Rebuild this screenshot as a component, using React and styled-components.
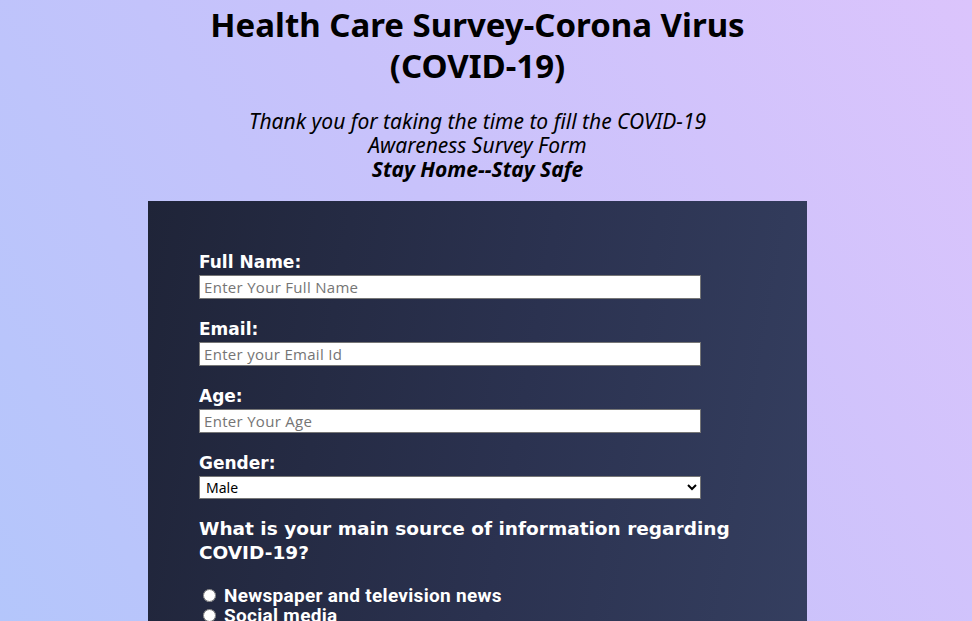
import styled, { createGlobalStyle } from 'styled-components';

const GlobalStyle = createGlobalStyle`
  html, body {
    margin: 0;
    padding: 0;
  }
  body {
    min-height: 100vh;
    background: linear-gradient(60deg, #b4c6fb 0%, #c8c2fb 50%, #dbc4fc 100%);
    background-attachment: fixed;
    font-family: "Noto Sans", "Open Sans", sans-serif;
  }
`;

const Page = styled.div`
  width: 955px;
  display: flex;
  flex-direction: column;
  align-items: center;
`;

const Header = styled.header`
  width: 560px;
  display: flex;
  flex-direction: column;
  align-items: center;
  text-align: center;
  color: #000;
`;

const Title = styled.h1`
  margin: 4px 0 0;
  font-family: "Noto Sans", sans-serif;
  font-size: 33px;
  line-height: 41px;
  font-weight: 700;
`;

const Subtitle = styled.p`
  width: 500px;
  margin: 23px 0 0;
  font-family: "Noto Sans", sans-serif;
  font-size: 21px;
  line-height: 24px;
  font-style: italic;
`;

const Motto = styled.b`
  display: block;
`;

const Form = styled.form`
  width: 659px;
  box-sizing: border-box;
  margin-top: 20px;
  padding: 50px 0 40px 51px;
  background: linear-gradient(100deg, #1f2438 0%, #2b3250 55%, #353f60 100%);
  color: #fff;
`;

const Field = styled.div`
  margin-bottom: ${({ last }) => (last ? '18px' : '19px')};
`;

const Label = styled.label`
  display: block;
  margin-bottom: 2px;
  font-family: "DejaVu Sans", sans-serif;
  font-size: 17px;
  line-height: 22px;
  font-weight: 700;
`;

const Input = styled.input`
  display: block;
  width: 502px;
  height: 24px;
  box-sizing: border-box;
  margin: 0;
  padding: 0 4px;
  border: 1px solid #767676;
  font-family: "Open Sans", sans-serif;
  font-size: 15px;
  letter-spacing: 0.3px;
  background: #fff;

  &::placeholder {
    color: #757575;
  }
`;

const Select = styled.select`
  display: block;
  width: 502px;
  height: 23px;
  box-sizing: border-box;
  margin: 0;
  padding: 0 0 0 2px;
  border: 1px solid #767676;
  border-radius: 0;
  font-family: "Noto Sans", sans-serif;
  font-size: 14px;
  color: #000;
  background: #fff;
`;

const Question = styled.p`
  margin: 0 0 20px;
  width: 560px;
  font-family: "DejaVu Sans", sans-serif;
  font-size: 18.5px;
  line-height: 24px;
  font-weight: 700;
`;

const Options = styled.ul`
  list-style: none;
  margin: 0;
  padding: 0;
`;

const Option = styled.li`
  display: flex;
  align-items: center;
  height: 20px;
  font-family: "Roboto", sans-serif;
  font-size: 19px;
  font-weight: 700;
  letter-spacing: 0.3px;
`;

const Radio = styled.input`
  margin: 0 8px 0 4px;
  width: 13px;
  height: 13px;
`;

const sources = [
  'Newspaper and television news',
  'Social media',
  'Government websites',
  'Friends and family',
];

export default function App() {
  return (
    <>
      <GlobalStyle />
      <Page>
        <Header>
          <Title>Health Care Survey-Corona Virus (COVID-19)</Title>
          <Subtitle>
            Thank you for taking the time to fill the COVID-19 Awareness Survey Form
            <Motto>Stay Home--Stay Safe</Motto>
          </Subtitle>
        </Header>
        <Form onSubmit={(e) => e.preventDefault()}>
          <Field>
            <Label htmlFor="name">Full Name:</Label>
            <Input id="name" type="text" placeholder="Enter Your Full Name" />
          </Field>
          <Field>
            <Label htmlFor="email">Email:</Label>
            <Input id="email" type="email" placeholder="Enter your Email Id" />
          </Field>
          <Field>
            <Label htmlFor="age">Age:</Label>
            <Input id="age" type="number" placeholder="Enter Your Age" />
          </Field>
          <Field last>
            <Label htmlFor="gender">Gender:</Label>
            <Select id="gender" defaultValue="male">
              <option value="male">Male</option>
              <option value="female">Female</option>
              <option value="other">Other</option>
            </Select>
          </Field>
          <Question>What is your main source of information regarding COVID-19?</Question>
          <Options>
            {sources.map((s) => (
              <Option key={s}>
                <Radio type="radio" name="source" value={s} />
                {s}
              </Option>
            ))}
          </Options>
        </Form>
      </Page>
    </>
  );
}
